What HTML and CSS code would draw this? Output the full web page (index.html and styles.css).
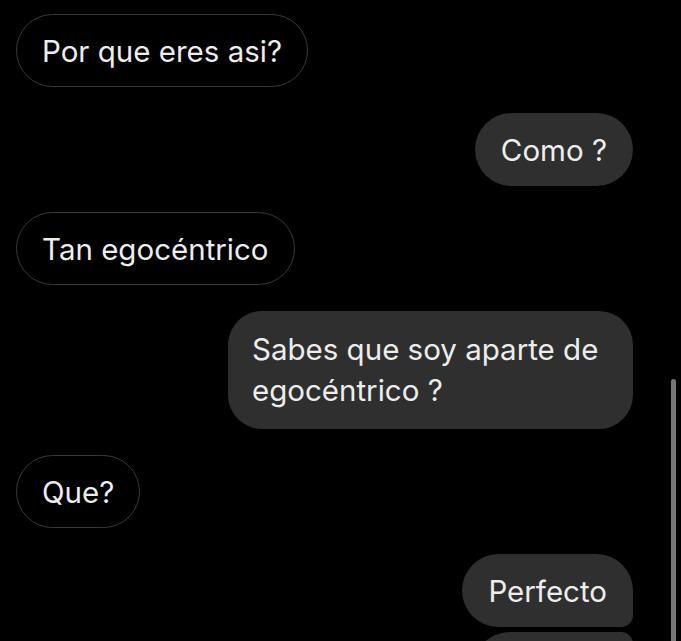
FILE: index.html
```html
<!DOCTYPE html>
<html lang="es">
<head>
<meta charset="utf-8">
<link rel="stylesheet" href="styles.css">
</head>
<body>
<div class="chat">
  <div class="msg in">Por que eres asi?</div>
  <div class="msg out">Como ?</div>
  <div class="msg in">Tan egocéntrico</div>
  <div class="msg out wide">Sabes que soy aparte de egocéntrico ?</div>
  <div class="msg in">Que?</div>
  <div class="group">
    <div class="msg out first">Perfecto</div>
    <div class="msg out next"></div>
  </div>
</div>
<div class="scrollbar"></div>
</body>
</html>
```
FILE: styles.css
```css
html, body {
  margin: 0;
  height: 100%;
  overflow: hidden;
  background: #000;
}
body {
  position: relative;
  font-family: Inter, "Liberation Sans", Arial, sans-serif;
  color: #ededed;
}
.chat {
  display: flex;
  flex-direction: column;
  gap: 26px;
  padding: 14px 48px 0 16px;
}
.group {
  display: flex;
  flex-direction: column;
  gap: 5px;
}
.msg {
  font-size: 29.5px;
  line-height: 41px;
  padding: 17px 26px 15px;
  border-radius: 37px;
  max-width: 355px;
}
.msg.in {
  align-self: flex-start;
  border: 1px solid #3a3a3a;
  padding: 16px 25px 14px;
}
.msg.out {
  align-self: flex-end;
  background: #2f2f2f;
}
.msg.first {
  border-bottom-right-radius: 12px;
}
.msg.next {
  width: 108px;
  height: 41px;
  border-top-right-radius: 12px;
}
.msg.wide {
  padding: 18px 26px 18px 24px;
  border-radius: 34px;
}
.scrollbar {
  position: absolute;
  left: 671px;
  top: 379px;
  width: 5px;
  height: 280px;
  border-radius: 3px;
  background: #777;
}
```
